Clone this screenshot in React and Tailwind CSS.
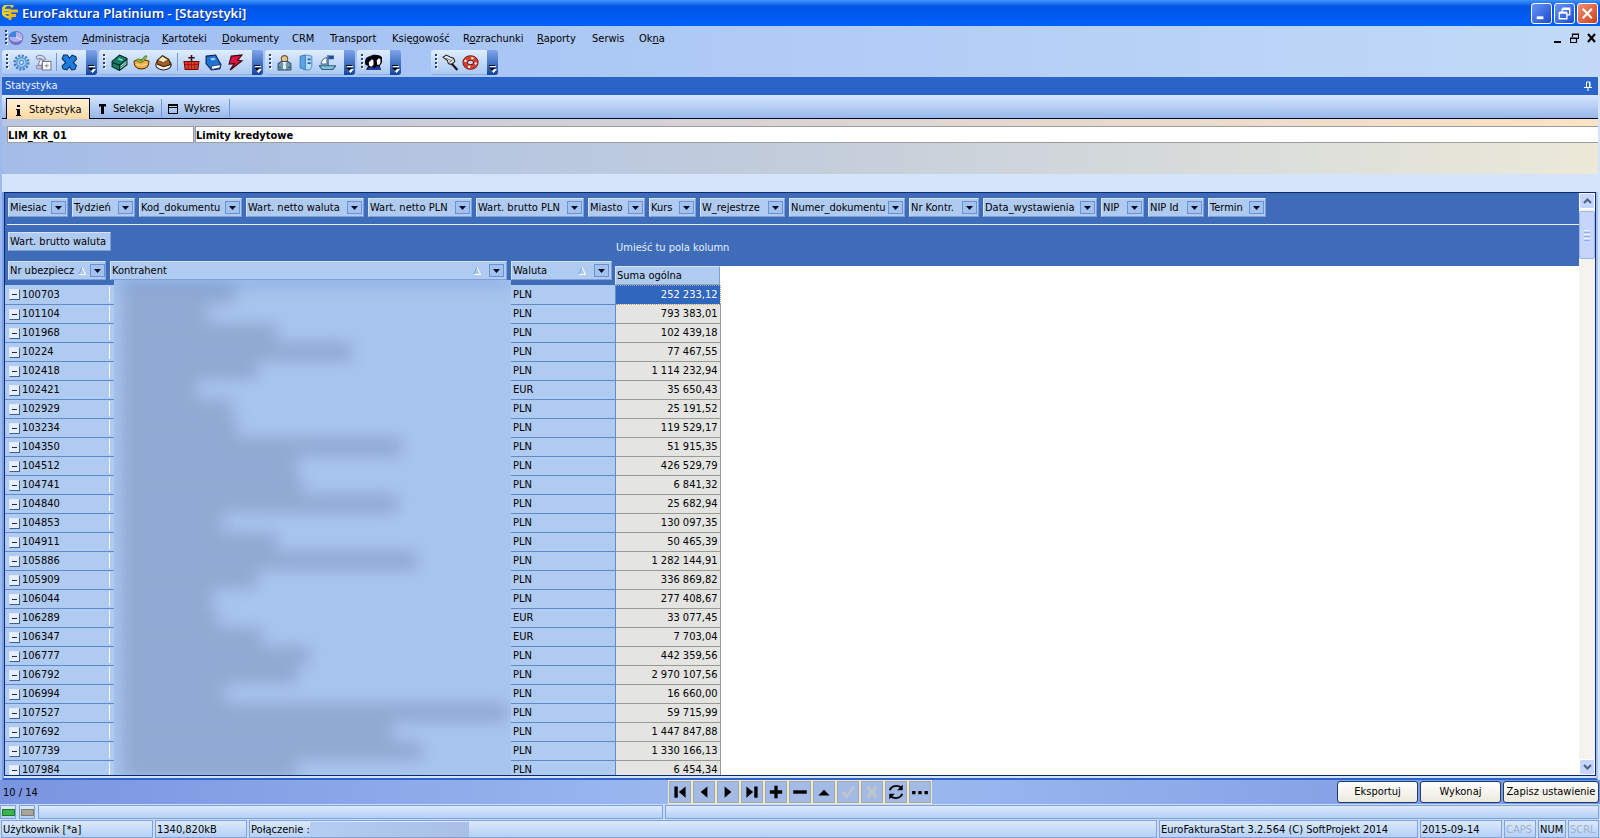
import React from "react";

const MENU = [
  ["S", "ystem", "", "w-[51px]"],
  ["A", "dministracja", "", "w-[80px]"],
  ["K", "artoteki", "", "w-[60px]"],
  ["D", "okumenty", "", "w-[70px]"],
  ["", "CRM", "", "w-[38px]"],
  ["", "Transport", "", "w-[62px]"],
  ["g", "owość", "Księ", "w-[71px]"],
  ["o", "zrachunki", "R", "w-[74px]"],
  ["R", "aporty", "", "w-[55px]"],
  ["", "Serwis", "", "w-[47px]"],
  ["n", "a", "Ok", "w-[40px]"],
];

const FILTERS = [
  ["Miesiac", "w-[60px]"],
  ["Tydzień", "w-[63px]"],
  ["Kod_dokumentu", "w-[103px]"],
  ["Wart. netto waluta", "w-[118px]"],
  ["Wart. netto PLN", "w-[104px]"],
  ["Wart. brutto PLN", "w-[108px]"],
  ["Miasto", "w-[57px]"],
  ["Kurs", "w-[47px]"],
  ["W_rejestrze", "w-[85px]"],
  ["Numer_dokumentu", "w-[116px]"],
  ["Nr Kontr.", "w-[70px]"],
  ["Data_wystawienia", "w-[114px]"],
  ["NIP", "w-[43px]"],
  ["NIP Id", "w-[56px]"],
  ["Termin", "w-[58px]"],
];

const ROWS = [
  ["100703", "PLN", "252 233,12", 108],
  ["101104", "PLN", "793 383,01", 80],
  ["101968", "PLN", "102 439,18", 150],
  ["10224", "PLN", "77 467,55", 225],
  ["102418", "PLN", "1 114 232,94", 130],
  ["102421", "EUR", "35 650,43", 70],
  ["102929", "PLN", "25 191,52", 105],
  ["103234", "PLN", "119 529,17", 110],
  ["104350", "PLN", "51 915,35", 275],
  ["104512", "PLN", "426 529,79", 170],
  ["104741", "PLN", "6 841,32", 175],
  ["104840", "PLN", "25 682,94", 270],
  ["104853", "PLN", "130 097,35", 95],
  ["104911", "PLN", "50 465,39", 150],
  ["105886", "PLN", "1 282 144,91", 290],
  ["105909", "PLN", "336 869,82", 130],
  ["106044", "PLN", "277 408,67", 85],
  ["106289", "EUR", "33 077,45", 90],
  ["106347", "EUR", "7 703,04", 135],
  ["106777", "PLN", "442 359,56", 182],
  ["106792", "PLN", "2 970 107,56", 170],
  ["106994", "PLN", "16 660,00", 98],
  ["107527", "PLN", "59 715,99", 380],
  ["107692", "PLN", "1 447 847,88", 265],
  ["107739", "PLN", "1 330 166,13", 295],
  ["107984", "PLN", "6 454,34", 170],
];

function Pic({ children }) {
  return (
    <svg width="17" height="17" viewBox="0 0 16 16" className="shrink-0" aria-hidden="true">
      {children}
    </svg>
  );
}

const GearIcon = () => (
  <Pic>
    <circle cx="8" cy="8" r="6.4" fill="none" stroke="#3f7fc0" strokeWidth="2.4" strokeDasharray="2 1.35" />
    <circle cx="8" cy="8" r="4.6" fill="#9ccbf2" stroke="#4c8fd0" />
    <circle cx="8" cy="8" r="1.8" fill="#e6f1ff" stroke="#3f7fc0" />
  </Pic>
);
const ToolIcon = () => (
  <Pic>
    <path d="M1 2.500L4 1l4 1 2 3-2 1-3-2-3 1z" fill="#dcdcea" stroke="#75759a" strokeWidth=".9" />
    <path d="M5 5l-2 5 3 1 2-5z" fill="#f2f2f8" stroke="#75759a" strokeWidth=".9" />
    <path d="M1 11h5v3H2z" fill="#c8c8de" stroke="#8080a0" strokeWidth=".8" />
    <rect x="7" y="7" width="8" height="8" fill="#fff" stroke="#77778c" />
    <path d="M11 9v4M9 11h4" stroke="#8d8da0" />
  </Pic>
);
const CrossIcon = () => (
  <Pic>
    <path d="M2.500 1L6 1l2 3 2.500-3L14 2.500 14.500 5 11.500 8l3 3L13 14.500l-3 .5-2-3-2.500 3-3.500-1L1 11.500 4.500 8 1 4.500z" fill="#1c7ddd" stroke="#0b2d6e" strokeWidth="1" />
  </Pic>
);
const GreenBookIcon = () => (
  <Pic>
    <path d="M1 7l7-6 7 3v6l-7 5.500-7-3.500z" fill="#12806c" stroke="#03251f" />
    <path d="M1.500 8L8 10.500v4.500M8 10.500l7-6" fill="none" stroke="#03251f" strokeWidth="1" />
    <path d="M9 11.500l5.500-4.500M9 13.500l5.500-4.500" stroke="#d8efe8" strokeWidth=".9" />
    <path d="M7 4.500l4 1.500" stroke="#8fe0cc" strokeWidth="1.500" />
  </Pic>
);
const BasketIcon = () => (
  <Pic>
    <path d="M1 7c0 4 2 7 7 7s7-3 7-7c-2-2-12-2-14 0z" fill="#f3ac48" stroke="#5e3608" />
    <path d="M3 6c2-3 4 0 5 0 2-3 3-5 5-4-1 3-3 5-5 6-2 0-4-1-5-2z" fill="#8cc04a" stroke="#4e6e16" strokeWidth=".8" />
    <path d="M3 9.500c2 1.500 7 1.500 10 0" fill="none" stroke="#ffdc92" />
  </Pic>
);
const CakeIcon = () => (
  <Pic>
    <ellipse cx="8" cy="10" rx="7.300" ry="5" fill="#f4f0ea" stroke="#2c2016" />
    <path d="M2 6l5-4.500 6 3.500 1.500 5L8 12 2 9.500z" fill="#a65f22" stroke="#3c2207" />
    <path d="M2.500 6L7 2l5.500 3.500L8 8z" fill="#fbe7c4" stroke="#3c2207" strokeWidth=".6" />
  </Pic>
);
const RedBasketIcon = () => (
  <Pic>
    <path d="M8 1v7M5 3.500h6" stroke="#3a1010" strokeWidth="1.500" />
    <path d="M1 7h14l-1 7.500h-12z" fill="#e03a2c" stroke="#6a0d0a" />
    <path d="M2 10h12M5 7v7M8 7v7M11 7v7" stroke="#8f1510" strokeWidth=".8" />
  </Pic>
);
const BlueBookIcon = () => (
  <Pic>
    <path d="M1 2l9-1 5 9-1 4-8 1-5-6z" fill="#1d72d2" stroke="#0a2250" />
    <path d="M6 11.500l8.500-1.500-.5 3-7.500 1.500z" fill="#fff" stroke="#0a2250" strokeWidth=".6" />
    <path d="M5 4l4-.5 1 2-4 .5z" fill="#9cd0ff" />
  </Pic>
);
const BoltIcon = () => (
  <Pic>
    <path d="M4 2l10-1-4 5 4 .5L3 15l4-6-5 .5z" fill="#dd1540" stroke="#400512" strokeWidth="1.100" />
  </Pic>
);
const ClerkIcon = () => (
  <Pic>
    <circle cx="8" cy="4.500" r="3" fill="#e6c694" stroke="#7a5a30" />
    <path d="M2 15V9l3-2h6l3 2v6z" fill="#6f9cb2" stroke="#33515f" />
    <path d="M6 7.500h4l-1 2 .5 4L8 14.500 6.500 13.500 7 9.500z" fill="#f0f4f4" />
    <path d="M2 12.500h3M11 12.500h3" stroke="#33515f" />
  </Pic>
);
const FolderIcon = () => (
  <Pic>
    <path d="M2 2l5-1v14l-5-2z" fill="#5ea4e4" stroke="#2f6fb2" strokeWidth=".8" />
    <path d="M7 1l6 1v10l-2 3H7z" fill="#b6dbfa" stroke="#3f7fc2" strokeWidth=".8" />
    <path d="M9 5h3M9 8.500h3" stroke="#2660a8" strokeWidth="1.600" />
  </Pic>
);
const BoatIcon = () => (
  <Pic>
    <path d="M8.500 1v11" stroke="#203d66" />
    <path d="M7.500 3C4 4 2 7 2 9.500h5.500z" fill="#fff" stroke="#49709a" />
    <path d="M9 1.500h5v3.500H9z" fill="#234f9a" />
    <path d="M0 11h16l-3 3.500H3z" fill="#7fc4d6" stroke="#2c5f7c" />
  </Pic>
);
const PeopleIcon = () => (
  <Pic>
    <path d="M0 8c0-4 2-6 5-6 1-2 9-2 11 1v5l-2 3 1 4H1l2-4C1 11 0 10 0 8z" fill="#05050d" />
    <path d="M3.500 8l3-3 1.500 1v4l-2 2-2-1z" fill="#fff" />
    <path d="M11 6l2-2 1.500 1v3l-1 2h-2z" fill="#fff" />
    <path d="M1 15l3-2.500h3l2 1 2-2 3 .5 1 3z" fill="#1c3ea2" />
  </Pic>
);
const PinToolIcon = () => (
  <Pic>
    <path d="M1 3l3-2 4 2 3 1 1 3-3 3-3-1-1-3z" fill="#f4f4f4" stroke="#222" />
    <path d="M9 9l5.500 6" stroke="#111" strokeWidth="2" />
    <path d="M4 4l4 2M7 8l3-3" stroke="#777" />
  </Pic>
);
const BuoyIcon = () => (
  <Pic>
    <ellipse cx="8" cy="8" rx="5" ry="4.300" fill="none" stroke="#5c130b" strokeWidth="5.200" />
    <ellipse cx="8" cy="8" rx="5" ry="4.300" fill="none" stroke="#d64030" strokeWidth="3.800" />
    <ellipse cx="8" cy="8" rx="5" ry="4.300" fill="none" stroke="#fff" strokeWidth="2" strokeDasharray="2 5.400" />
  </Pic>
);

function ToolGroup({ label, icons, className }) {
  return (
    <div className={`flex h-[25px] overflow-hidden rounded-[3px] ${className}`} role="toolbar" aria-label={label}>
      <div className="flex flex-1 items-center justify-between border-b border-[#8aaee6] bg-linear-to-b from-[#dfecfd] to-[#abc9f5] pr-2 pl-1">
        <Grip />
        {icons.map(([name, Icon], i) =>
          Icon ? (
            <button key={i} type="button" aria-label={name} className="flex">
              <Icon />
            </button>
          ) : (
            <span key={i} className="h-[18px] w-px bg-[#6d9be0]" />
          )
        )}
      </div>
      <button
        type="button"
        aria-label={`${label} – więcej`}
        className="flex w-[11px] items-end justify-center bg-linear-to-b from-[#7fa5ea] to-[#12449f] pb-[2px]"
      >
        <svg width="8" height="8" viewBox="0 0 8 8" aria-hidden="true">
          <path d="M1 1.500h6" stroke="#fff" />
          <path d="M0 .5h6" stroke="#000" />
          <path d="M1 4h7L4.500 8z" fill="#fff" />
          <path d="M0 3h6L3 6z" fill="#000" />
        </svg>
      </button>
    </div>
  );
}

function Grip() {
  return (
    <svg width="3" height="16" viewBox="0 0 3 16" aria-hidden="true" className="shrink-0">
      {[0, 4, 8, 12].map((y) => (
        <g key={y}>
          <rect x="1" y={y + 1} width="2" height="2" fill="#fff" />
          <rect x="0" y={y} width="2" height="2" fill="#27417f" />
        </g>
      ))}
    </svg>
  );
}

function DropArrow({ label }) {
  return (
    <button
      type="button"
      aria-label={`Filtr: ${label}`}
      className="flex h-[13px] w-[15px] shrink-0 items-center justify-center border border-[#6b90d8] bg-[#a3c2ee]"
    >
      <svg width="7" height="4" viewBox="0 0 7 4" aria-hidden="true">
        <path d="M0 0h7L3.500 4z" fill="#000b2a" />
      </svg>
    </button>
  );
}

function SortMark() {
  return (
    <svg width="8" height="9" viewBox="0 0 8 9" aria-hidden="true" className="shrink-0">
      <path d="M4 1L1 8" stroke="#7f9fd0" fill="none" />
      <path d="M4 1l3.500 7.500H1" stroke="#fff" fill="none" />
    </svg>
  );
}

const CHIP =
  "flex h-[19px] items-center justify-between border-t border-l border-r border-b border-t-[#d3e4fb] border-l-[#d3e4fb] border-r-[#7f9fd6] border-b-[#7f9fd6] bg-[#b0cbf1] pl-px whitespace-nowrap";

const NAV = [
  ["Pierwszy", <path d="M3 3h3v10H3zM13 3v10L7 8z" />],
  ["Poprzedni", <path d="M11 3v10L5 8z" />],
  ["Następny", <path d="M5 3v10l6-5z" />],
  ["Ostatni", <path d="M10 3h3v10h-3zM3 3v10l6-5z" />],
  ["Dodaj", <path d="M6.500 2.500h3v4h4v3h-4v4h-3v-4h-4v-3h4z" />],
  ["Usuń", <path d="M2 6.500h12v3H2z" />],
  ["Edytuj", <path d="M3 11l5-5 5 5z" />],
  ["Zatwierdź", <path d="M2 9l3-2 2 3 5-7 2 1-7 10z" fill="#bfc5cd" />],
  ["Anuluj", <path d="M3 4l2-2 3 4 3-4 2 2-3 4 3 4-2 2-3-4-3 4-2-2 3-4z" fill="#bfc5cd" />],
  [
    "Odśwież",
    <g>
      <path d="M2.500 6.500a6 5 0 0 1 10-2.500M13.500 9.500a6 5 0 0 1-10 2.500" fill="none" stroke="#000" strokeWidth="1.600" />
      <path d="M14 1.500v5H9zM2 14.500v-5h5z" />
    </g>,
  ],
  ["Więcej", <path d="M1 7h3v3H1zM6.500 7h3v3h-3zM12 7h3v3h-3z" />],
];

const ACTION =
  "h-[22px] rounded-[3px] border border-[#1d3f66] bg-linear-to-b from-white to-[#ece9dc] text-center whitespace-nowrap";
const PANEL = "border border-[#7fa2dc] bg-linear-to-b from-[#dbe9fc] to-[#b5d0f6]";
const STATUS = `${PANEL} flex items-center px-px pt-px whitespace-nowrap`;
const TAB = "flex items-center pt-[2px]";

export default function App() {
  return (
    <div className="flex h-screen min-w-[1300px] flex-col overflow-hidden bg-[#d5e4fa] font-['DejaVu_Sans_Condensed','DejaVu_Sans',sans-serif] text-[11px] leading-[14px] text-black">
      <header className="flex h-[26px] shrink-0 items-center bg-linear-to-b from-[#3f93fb] via-[#0054e6] via-25% to-[#0062fb] pr-[2px] pl-[2px]">
        <svg width="17" height="17" viewBox="0 0 17 17" aria-hidden="true">
          <path d="M11 2a6 6 0 1 0-1 9M1 5h8M1 8h7" fill="none" stroke="#e6d22a" strokeWidth="2.600" />
          <path d="M8 15V6h8M8 10.500h6" fill="none" stroke="#f2b81c" strokeWidth="2.800" />
        </svg>
        <h1 className="ml-[3px] flex-1 font-['Noto_Sans',sans-serif] text-[13px] font-semibold whitespace-nowrap text-white [text-shadow:1px_1px_#0a2f8c]">
          EuroFaktura Platinium - [Statystyki]
        </h1>
        <div className="flex gap-[2px]">
          {[
            ["Minimalizuj", "from-[#6b94f5] to-[#1c48cf]", <path d="M5 13h7v3H5z" fill="#fff" />],
            ["Przywróć", "from-[#6b94f5] to-[#1c48cf]", <path d="M7.500 8V5.500h8v6H13M8 4.500h8M4.500 9.500h8v6h-8zM4.500 8.500h8" fill="none" stroke="#fff" strokeWidth="1.400" />],
            ["Zamknij", "from-[#ef8f6f] to-[#cc3a17]", <path d="M5 5l9.500 10M14.500 5L5 15" stroke="#fff" strokeWidth="2.200" />],
          ].map(([name, tone, shape]) => (
            <button
              key={name}
              type="button"
              aria-label={name}
              className={`flex size-[21px] items-center justify-center rounded-[3px] border border-white bg-linear-to-br ${tone}`}
            >
              <svg width="19" height="19" viewBox="0 0 20 20" aria-hidden="true">
                {shape}
              </svg>
            </button>
          ))}
        </div>
      </header>

      <div className="shrink-0 bg-linear-to-r from-[#9fbdf3] to-[#c2daf8]">
        <div className="flex h-6 items-center pr-1 pl-[5px]">
          <Grip />
          <svg width="16" height="16" viewBox="0 0 16 16" aria-hidden="true">
            <ellipse cx="8" cy="9" rx="7" ry="6" fill="#6c6cc2" />
            <ellipse cx="8" cy="7" rx="7" ry="5.500" fill="#b0b0ee" stroke="#7676c4" />
            <path d="M8 7V1.500A7 5.500 0 0 0 1 7z" fill="#3a86e4" />
            <path d="M8 7l6 3" stroke="#e8e8ff" />
          </svg>
          <nav className="flex flex-1 pt-[2px] pl-[7px]" aria-label="Menu główne">
            {MENU.map(([key, rest, before, width]) => (
              <button key={before + key + rest} type="button" className={`text-left whitespace-nowrap ${width}`}>
                {before}
                <span className="underline">{key}</span>
                {rest}
              </button>
            ))}
          </nav>
          <div className="flex items-center gap-2">
            <button type="button" aria-label="Minimalizuj okno">
              <svg width="9" height="10" viewBox="0 0 9 10" aria-hidden="true">
                <path d="M1 8h7v2H1z" />
              </svg>
            </button>
            <button type="button" aria-label="Przywróć okno">
              <svg width="9" height="10" viewBox="0 0 9 10" aria-hidden="true">
                <path d="M2.500 4V1.500h6v4H7M.5 5.500h6v4h-6zM2 1h7M0 5h7" fill="none" stroke="#000" strokeWidth="1.200" />
              </svg>
            </button>
            <button type="button" aria-label="Zamknij okno">
              <svg width="9" height="10" viewBox="0 0 9 10" aria-hidden="true">
                <path d="M1 1l7 8M8 1L1 9" stroke="#000" strokeWidth="2.200" />
              </svg>
            </button>
          </div>
        </div>
        <div className="flex h-[27px] gap-[2px] pl-[2px]">
          <ToolGroup label="Ustawienia" className="w-[95px]" icons={[["Konfiguracja", GearIcon], ["Narzędzia", ToolIcon], ["", null], ["Zamknij", CrossIcon]]} />
          <ToolGroup
            label="Kartoteki"
            className="w-[164px]"
            icons={[["Księga", GreenBookIcon], ["Towary", BasketIcon], ["Wyroby", CakeIcon], ["", null], ["Koszyk", RedBasketIcon], ["Dziennik", BlueBookIcon], ["Szybka operacja", BoltIcon]]}
          />
          <ToolGroup label="Kontakty" className="w-[90px]" icons={[["Pracownik", ClerkIcon], ["Dokumenty", FolderIcon], ["Transport", BoatIcon]]} />
          <ToolGroup label="CRM" className="w-[44px]" icons={[["Klienci", PeopleIcon]]} />
          <ToolGroup label="Pomoc" className="ml-7 w-[67px]" icons={[["Przypnij", PinToolIcon], ["Pomoc", BuoyIcon]]} />
        </div>
      </div>

      <div className="flex min-h-0 flex-1 flex-col border-l-2 border-[#9dbaf0]">
        <div className="mr-[2px] flex h-[18px] shrink-0 items-center justify-between bg-[#2a64c8] pr-[6px] pl-[3px] text-[#eaf3ff]">
          <h2>Statystyka</h2>
          <button type="button" aria-label="Przypnij panel">
            <svg width="8" height="10" viewBox="0 0 8 10" aria-hidden="true">
              <path d="M2.500 6V1h3.500v5M5.500 1v5M0 6.500h8M4 7v3" fill="none" stroke="#fff" />
            </svg>
          </button>
        </div>

        <div className="mr-[2px] flex h-6 shrink-0 items-end border-b border-[#04042e] bg-linear-to-b from-[#d6e6fc] to-[#98b8ea] pl-1" role="tablist">
          <button
            type="button"
            role="tab"
            aria-selected="true"
            className={`${TAB} -mb-px h-[21px] w-[84px] gap-2 border border-b-0 border-[#04042e] bg-linear-to-b from-[#fff0d8] to-[#ffd9a0] pl-[9px]`}
          >
            <svg width="5" height="11" viewBox="0 0 5 11" aria-hidden="true">
              <path d="M1 0h3v2H1zM0 4h4v6h1v1H0v-1h1V5H0z" />
            </svg>
            Statystyka
          </button>
          <button type="button" role="tab" aria-selected="false" className={`${TAB} mb-px h-[18px] w-[72px] gap-[7px] border-r border-[#6f97d8] pl-[9px]`}>
            <svg width="7" height="10" viewBox="0 0 7 10" aria-hidden="true">
              <path d="M0 0h7v3L5 2v8H2V2L0 3z" />
            </svg>
            Selekcja
          </button>
          <button type="button" role="tab" aria-selected="false" className={`${TAB} mb-px h-[18px] w-[68px] gap-[6px] border-r border-[#6f97d8] pl-[6px]`}>
            <svg width="10" height="10" viewBox="0 0 10 10" aria-hidden="true">
              <path d="M0 0h10v10H0zM1 4v5h8V4zM1 2v1h8V2z" fillRule="evenodd" />
            </svg>
            Wykres
          </button>
        </div>

        <form className="mr-[2px] h-[55px] shrink-0 bg-linear-to-r from-[#a4bce8] via-[#c3cddb] to-[#ece9d8]">
          <div className="h-[7px] bg-linear-to-r from-[#b9c6e0] to-[#fbe3c4]" />
          <div className="flex gap-px pl-[5px]">
            <input aria-label="Kod statystyki" defaultValue="LIM_KR_01" className="h-[17px] w-[187px] border border-[#9c9c9c] bg-white pt-px font-bold" />
            <input aria-label="Nazwa statystyki" defaultValue="Limity kredytowe" className="h-[17px] min-w-0 flex-1 border border-r-0 border-[#9c9c9c] bg-white pt-px font-bold" />
          </div>
        </form>

        <div className="mr-[2px] h-[18px] shrink-0 bg-[#d5e4fa]" />

        <div className="mr-[2px] flex min-h-0 flex-1 border-r-2 border-b-2 border-l-2 border-r-[#a7c2f0] border-b-[#2a64c8] border-l-[#7ba0e4] pb-[2px]">
          <div className="flex min-w-0 flex-1 border border-[#0a2a72] bg-white">
            <div className="flex min-w-0 flex-1 flex-col">
              <div className="shrink-0 bg-[#3e6cb8]">
                <div className="ml-[2px] flex h-8 gap-1 border-b border-[#e4eefc] pt-[5px] pl-px">
                  {FILTERS.map(([name, width]) => (
                    <div key={name} className={`${CHIP} ${width} shrink-0 pr-px`}>
                      {name}
                      <DropArrow label={name} />
                    </div>
                  ))}
                </div>
                <div className="flex h-9 pt-[7px] pl-[3px]">
                  <div className={`${CHIP} w-[103px]`}>Wart. brutto waluta</div>
                  <div className="pt-[9px] pl-[505px] whitespace-nowrap text-[#e6f0ff]">Umieść tu pola kolumn</div>
                </div>
              </div>

              <div className="flex min-h-0 flex-1 overflow-hidden">
                <div className="relative w-[715px] shrink-0">
                  <table className="w-full table-fixed border-collapse">
                    <colgroup>
                      <col className="w-[105px]" />
                      <col className="w-[401px]" />
                      <col className="w-[104px]" />
                      <col className="w-[105px]" />
                    </colgroup>
                    <thead>
                      <tr className="h-6 bg-[#3e6cb8]">
                        <th scope="col" className="p-0 pl-[3px] align-top font-normal">
                          <div className={`${CHIP} w-[98px] gap-1 pr-px`}>
                            <span className="flex-1 text-left">Nr ubezpiecz</span>
                            <SortMark />
                            <DropArrow label="Nr ubezpiecz" />
                          </div>
                        </th>
                        <th scope="col" className="p-0 align-top font-normal">
                          <div className={`${CHIP} w-[397px] gap-2 pr-[2px]`}>
                            <span className="flex-1 text-left">Kontrahent</span>
                            <SortMark />
                            <DropArrow label="Kontrahent" />
                          </div>
                        </th>
                        <th scope="col" className="p-0 align-top font-normal">
                          <div className={`${CHIP} w-[101px] gap-2 pr-[2px]`}>
                            <span className="flex-1 text-left">Waluta</span>
                            <SortMark />
                            <DropArrow label="Waluta" />
                          </div>
                        </th>
                        <th scope="col" className="p-0 align-bottom font-normal">
                          <div className={`${CHIP} pt-px`}>Suma ogólna</div>
                        </th>
                      </tr>
                    </thead>
                    <tbody>
                      {ROWS.map(([id, cur, sum], i) => (
                        <tr key={id} className="h-[19px]">
                          <td className="border-b border-[#6389cd] bg-[#b0cbf1] p-0 pl-1">
                            <div className="flex items-center gap-[2px] border-r border-white pt-px">
                              <button
                                type="button"
                                aria-label={`Zwiń ${id}`}
                                className="flex size-[11px] items-center justify-center border border-t-[#dfe9f8] border-r-[#3c5f96] border-b-[#3c5f96] border-l-[#dfe9f8] bg-[#e6effb]"
                              >
                                <span className="h-px w-[5px] bg-[#1c2c50]" />
                              </button>
                              {id}
                            </div>
                          </td>
                          <td className="border-b border-[#6389cd] bg-[#b0cbf1] p-0" />
                          <td className="border-r border-b border-[#6389cd] bg-[#b0cbf1] p-0 pt-px pl-[2px]">{cur}</td>
                          <td
                            className={
                              i === 0
                                ? "border border-dotted border-[#c8a070] bg-[#2f66be] p-0 pr-[2px] text-right text-white"
                                : "border-r border-b border-[#9a9a92] bg-[#e4e4e2] p-0 pr-[2px] text-right"
                            }
                          >
                            {sum}
                          </td>
                        </tr>
                      ))}
                    </tbody>
                  </table>
                  <div className="absolute top-[19px] left-[109px] w-[397px] overflow-hidden bg-[#a8c5ee]" aria-hidden="true">
                    <div className="blur-[8px]">
                      <div className="h-[5px] bg-[#6f97d8]" />
                      {ROWS.map(([id, , , width]) => (
                        <div key={id} className="flex h-[19px] items-center pl-2">
                          <div className="h-[17px] bg-[#8da6ce]" style={{ width: width + 5 }} />
                        </div>
                      ))}
                    </div>
                  </div>
                </div>
                <div className="flex-1 border-t-[5px] border-[#3e6cb8] bg-white" />
              </div>
            </div>

            <div className="flex w-4 shrink-0 flex-col gap-[2px] bg-[#f4f3ee]">
              <button type="button" aria-label="Przewiń w górę" className="flex h-4 items-center justify-center rounded-[2px] border border-white bg-[#c6d5fb]">
                <svg width="9" height="6" viewBox="0 0 9 6" aria-hidden="true">
                  <path d="M1 5l3.500-3.500L8 5" fill="none" stroke="#4d6185" strokeWidth="2" />
                </svg>
              </button>
              <div className="flex h-12 flex-col items-center justify-center gap-px rounded-[2px] border border-[#9db5ea] bg-[#c6d5fb]">
                <span className="h-px w-[6px] bg-[#eef4fe]" />
                <span className="h-px w-[6px] bg-[#8cb0f8]" />
                <span className="h-px w-[6px] bg-[#eef4fe]" />
                <span className="h-px w-[6px] bg-[#8cb0f8]" />
                <span className="h-px w-[6px] bg-[#eef4fe]" />
                <span className="h-px w-[6px] bg-[#8cb0f8]" />
              </div>
              <button type="button" aria-label="Przewiń w dół" className="mt-auto flex h-4 items-center justify-center rounded-[2px] border border-white bg-[#c6d5fb]">
                <svg width="9" height="6" viewBox="0 0 9 6" aria-hidden="true">
                  <path d="M1 1l3.500 3.500L8 1" fill="none" stroke="#4d6185" strokeWidth="2" />
                </svg>
              </button>
            </div>
          </div>
        </div>
      </div>

      <div className="grid h-6 shrink-0 grid-cols-[1fr_auto_1fr] items-center bg-linear-to-r from-[#7b94e0] via-[#a0bff2] to-[#7b94e0]">
        <span className="pt-px pl-[3px]">10 / 14</span>
        <div className="flex">
          {NAV.map(([name, shape]) => (
            <button
              key={name}
              type="button"
              aria-label={name}
              className="flex size-6 items-center justify-center border border-[#e8e8de]"
            >
              <span className="flex size-full items-center justify-center border border-[#aaa89f] bg-[#a3bae4]">
                <svg width="18" height="18" viewBox="0 0 16 16" aria-hidden="true">
                  {shape}
                </svg>
              </span>
            </button>
          ))}
        </div>
        <div className="flex justify-end gap-[2px] pr-px">
          <button type="button" className={`${ACTION} w-[81px]`}>Eksportuj</button>
          <button type="button" className={`${ACTION} w-[81px]`}>Wykonaj</button>
          <button type="button" className={`${ACTION} w-[96px]`}>Zapisz ustawienie</button>
        </div>
      </div>

      <div className="flex h-4 shrink-0 gap-[2px] bg-[#c9dcf8] py-px pr-px">
        <div className={`${PANEL} mr-px flex w-4 items-center justify-center`}>
          <span className="h-[7px] w-[13px] border border-[#1c7a2a] bg-[#3ab54a]" />
        </div>
        <div className={`${PANEL} mr-px flex w-4 items-center justify-center`}>
          <span className="h-[7px] w-[13px] border border-[#7d7d78] bg-[#a9a59c]" />
        </div>
        <div className={`${PANEL} w-[625px]`} />
        <div className={`${PANEL} flex-1`} />
      </div>

      <footer className="flex h-[18px] shrink-0 gap-[2px] bg-[#c9dcf8] pr-px pl-px">
        <div className={`${STATUS} w-[152px]`}>Użytkownik [*a]</div>
        <div className={`${STATUS} w-[92px]`}>1340,820kB</div>
        <div className={`${STATUS} flex-1`}>
          <span>Połączenie :</span>
          <span className="h-full w-[159px] bg-linear-to-r from-[#b5cdf2] to-[#a9bfe6]" />
        </div>
        <div className={`${STATUS} w-[259px]`}>EuroFakturaStart 3.2.564 (C) SoftProjekt 2014</div>
        <div className={`${STATUS} w-[82px]`}>2015-09-14</div>
        <div className={`${STATUS} w-8 text-[#9fb0cc]`}>CAPS</div>
        <div className={`${STATUS} w-7`}>NUM</div>
        <div className={`${STATUS} w-[31px] text-[#9fb0cc]`}>SCRL</div>
      </footer>
    </div>
  );
}
